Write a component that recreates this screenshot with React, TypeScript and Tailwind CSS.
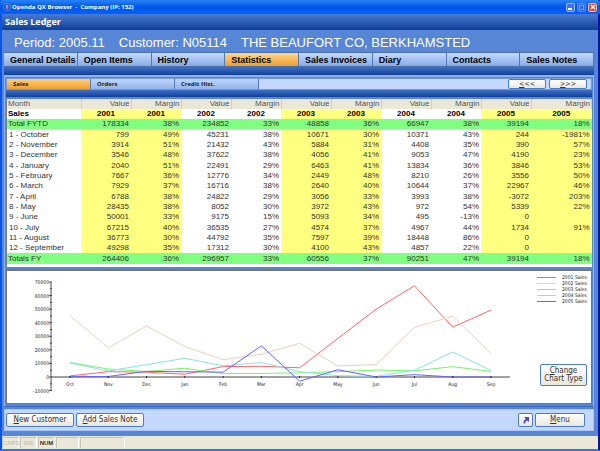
import { ReactNode } from "react";
import clsx from "clsx";

const TABS = [
  "General Details",
  "Open Items",
  "History",
  "Statistics",
  "Sales Invoices",
  "Diary",
  "Contacts",
  "Sales Notes",
];

const SUB_TABS = ["Sales", "Orders", "Credit Hist."];

const YEARS = ["2001", "2002", "2003", "2004", "2005"];

interface Row {
  label: string;
  total?: boolean;
  // value, margin for each year in YEARS
  cells: string[];
}

const ROWS: Row[] = [
  { label: "Total FYTD", total: true, cells: ["178334", "38%", "234852", "33%", "48858", "36%", "66947", "38%", "39194", "18%"] },
  { label: "1 - October", cells: ["799", "49%", "45231", "38%", "10671", "30%", "10371", "43%", "244", "-1981%"] },
  { label: "2 - November", cells: ["3914", "51%", "21432", "43%", "5884", "31%", "4408", "35%", "390", "57%"] },
  { label: "3 - December", cells: ["3546", "48%", "37622", "38%", "4056", "41%", "9053", "47%", "4190", "23%"] },
  { label: "4 - January", cells: ["2040", "51%", "22491", "29%", "6463", "41%", "13834", "36%", "3846", "53%"] },
  { label: "5 - February", cells: ["7667", "36%", "12776", "34%", "2449", "48%", "8210", "26%", "3556", "50%"] },
  { label: "6 - March", cells: ["7929", "37%", "16716", "38%", "2640", "40%", "10644", "37%", "22967", "46%"] },
  { label: "7 - April", cells: ["6788", "38%", "24822", "29%", "3056", "33%", "3993", "38%", "-3072", "203%"] },
  { label: "8 - May", cells: ["28435", "38%", "8052", "30%", "3972", "43%", "972", "54%", "5339", "22%"] },
  { label: "9 - June", cells: ["50001", "33%", "9175", "15%", "5093", "34%", "495", "-13%", "0", ""] },
  { label: "10 - July", cells: ["67215", "40%", "36535", "27%", "4574", "37%", "4967", "44%", "1734", "91%"] },
  { label: "11 - August", cells: ["36773", "30%", "44792", "35%", "7597", "39%", "18448", "86%", "0", ""] },
  { label: "12 - September", cells: ["49298", "35%", "17312", "30%", "4100", "43%", "4857", "22%", "0", ""] },
  { label: "Totals FY", total: true, cells: ["264406", "36%", "296957", "33%", "60556", "37%", "90251", "47%", "39194", "18%"] },
];

const MONTHS = ["Oct", "Nov", "Dec", "Jan", "Feb", "Mar", "Apr", "May", "Jun", "Jul", "Aug", "Sep"];
const COLORS = ["#ff6464", "#e6d2be", "#78f564", "#8ce1e1", "#6464ff"];
const TICKS = [70000, 60000, 50000, 40000, 30000, 20000, 10000, 0, -10000];

const xAt = (i: number) => 63 + (i * 421) / 11;
const yAt = (v: number) => 106 - (v * 95) / 70000;

function XpButton({ children, className, label }: { children: ReactNode; className?: string; label?: string }) {
  return (
    <button
      type="button"
      aria-label={label}
      className={clsx(
        "flex items-center justify-center rounded-[2px] border border-[#4a7dc4] bg-linear-to-b from-white to-[#e9e7dc] text-[#333]",
        className
      )}
    >
      {children}
    </button>
  );
}

function TitleBar() {
  return (
    <header className="flex h-[14px] items-center gap-px rounded-t-[3px] bg-linear-to-b from-[#2a82f8] via-[#0055e5] to-[#0062ff] px-[3px]">
      <svg viewBox="0 0 8 8" className="size-2">
        <circle cx="4" cy="4" r="3.6" fill="#2c4fae" stroke="#6f94e0" strokeWidth="0.7" />
        <path d="M2.6 2.6 Q4 1.4 5.4 2.8 Q5.8 5 4 6.2 Q2.4 5 3 3.6 Z" fill="#9db8ee" />
        <path d="M3.4 3.4 H4.8 M3.6 4.6 H4.6" stroke="#2c4fae" strokeWidth="0.6" />
      </svg>
      <span className="grow font-['Open_Sans',sans-serif] text-[6px] leading-[14px] font-bold whitespace-pre text-white">
        Openda QX Browser  -  Company (IP: 152)
      </span>
      <div className="flex gap-[2px]">
        <button type="button" aria-label="Minimize" className="flex size-[9px] items-end rounded-[2px] border border-[#9fbdf5] bg-[#3f70e8] p-px">
          <span className="h-[2px] w-1 bg-white" />
        </button>
        <button type="button" aria-label="Maximize" disabled className="size-[9px] rounded-[2px] border border-[#5f8cf0] bg-[#2f66e4] p-px">
          <span className="block size-[5px] border border-[#7fa2f2]" />
        </button>
        <button type="button" aria-label="Close" className="flex size-[9px] items-center justify-center rounded-[2px] border border-[#f0b8a8] bg-[#e2512b]">
          <svg viewBox="0 0 6 6" className="size-[6px]">
            <path d="M1 1 L5 5 M5 1 L1 5" stroke="white" strokeWidth="1.3" />
          </svg>
        </button>
      </div>
    </header>
  );
}

function SalesTable() {
  return (
    <table className="h-[165px] w-full table-fixed border-collapse font-['Liberation_Sans',sans-serif] text-[8px] leading-[10px] text-[#333]">
      <colgroup>
        <col className="w-[74px]" />
        {YEARS.map((y, i) => [
          <col key={y + "v"} className="w-[50px]" />,
          <col key={y + "m"} className={i === 4 ? "" : "w-[50px]"} />,
        ])}
      </colgroup>
      <thead>
        <tr className="h-[10px] bg-[#ebe8d8] text-[#555]">
          <th className="border-r border-[#d0cdbd] p-0 pl-px text-left font-normal">Month</th>
          {YEARS.map((y) => [
            <th key={y + "v"} className="border-r border-[#d0cdbd] p-0 pr-px text-right font-normal">Value</th>,
            <th key={y + "m"} className="border-r border-[#d0cdbd] p-0 pr-px text-right font-normal">Margin</th>,
          ])}
        </tr>
        <tr className="h-[10px] text-black">
          <th className="p-0 pl-px text-left">Sales</th>
          {YEARS.map((y, i) => [
            <th key={y + "v"} className={clsx("p-0", i % 2 === 0 && "bg-[#ffff80]")}>{y}</th>,
            <th key={y + "m"} className={clsx("p-0", i % 2 === 0 && "bg-[#ffff80]")}>{y}</th>,
          ])}
        </tr>
      </thead>
      <tbody>
        {ROWS.map((row) => (
          <tr key={row.label} className={row.total ? "bg-[#80ff80]" : ""}>
            <td className={clsx("p-0 whitespace-nowrap", row.total ? "pl-px" : "pl-[2px]")}>{row.label}</td>
            {row.cells.map((cell, i) => (
              <td
                key={i}
                className={clsx("p-0 pr-[2px] text-right", !row.total && i % 4 < 2 && "bg-[#ffff80]")}
              >
                {cell}
              </td>
            ))}
          </tr>
        ))}
      </tbody>
    </table>
  );
}

function SalesChart() {
  const months = ROWS.filter((r) => !r.total);
  return (
    <svg viewBox="0 0 584 132" className="block w-full" fontSize="5" fill="#222">
      {/* axes */}
      <path d={`M44 ${yAt(70000)} V${yAt(-10000)}`} stroke="#555" />
      <path d={`M44 ${yAt(0)} H503`} stroke="#444" />
      {TICKS.map((t) => (
        <g key={t}>
          <path d={`M42 ${yAt(t)} H45`} stroke="#444" />
          {t > -10000 && <path d={`M43 ${yAt(t - 5000)} H45`} stroke="#444" />}
          <text x="42" y={yAt(t) + 2} textAnchor="end">{t}</text>
        </g>
      ))}

      {/* one line for each year */}
      {YEARS.map((y, s) => (
        <polyline
          key={y}
          points={months.map((r, i) => `${xAt(i)},${yAt(Number(r.cells[s * 2]))}`).join(" ")}
          fill="none"
          stroke={COLORS[s]}
        />
      ))}

      {MONTHS.map((m, i) => (
        <g key={m}>
          <path d={`M${xAt(i)} 105 V107`} stroke="#222" />
          <text x={xAt(i)} y="115" textAnchor="middle">{m}</text>
        </g>
      ))}

      {/* legend */}
      {YEARS.map((y, i) => (
        <g key={y}>
          <rect x="530" y={6 + i * 6} width="19" height="1" fill={COLORS[i]} />
          <text x="555" y={8 + i * 6}>{y} Sales</text>
        </g>
      ))}
    </svg>
  );
}

export default function App() {
  return (
    <div className="w-full bg-[#5886d7] font-['DejaVu_Sans_Condensed','DejaVu_Sans',sans-serif]">
      <div className="border-x-2 border-b-2 border-[#0a55e0] border-r-[#0318a8] border-b-[#2a78e8]">
        <div className="-mx-[2px]">
          <TitleBar />
        </div>

        <h1 className="h-4 bg-linear-to-b from-[#4a7ad0] to-[#0d3f98] pl-[3px] font-['Open_Sans',sans-serif] text-[9px] leading-[15px] font-bold text-white">
          Sales Ledger
        </h1>

        <div className="px-[2px] pr-1">
          <p className="flex h-[22px] items-center gap-[14px] pt-[3px] pl-[10px] font-['Liberation_Sans',sans-serif] text-[13px] leading-4 whitespace-nowrap text-white">
            <span>Period: 2005.11</span>
            <span>Customer: N05114</span>
            <span>THE BEAUFORT CO, BERKHAMSTED</span>
          </p>

          <nav className="flex h-[15px] border-y border-[#4a6ea8] font-['Liberation_Sans',sans-serif]">
            {TABS.map((tab) => (
              <button
                key={tab}
                type="button"
                className={clsx(
                  "min-w-0 flex-1 border-r border-[#5578b4] pt-px pl-[6px] text-left text-[9px] leading-[12px] font-bold whitespace-nowrap text-black",
                  tab === "Statistics"
                    ? "bg-linear-to-b from-[#ffd685] to-[#f09f28]"
                    : "bg-linear-to-b from-[#c4d9fb] to-[#87abe6]"
                )}
              >
                {tab}
              </button>
            ))}
          </nav>
          <div className="h-2 bg-linear-to-b from-[#3f70c8] to-[#0f3f98]" />

          <main className="border border-t-2 border-[#8fb1ee] border-b-[#3a68bd] px-px pt-px pb-[2px]">
            <nav className="flex h-3 border border-[#7398d8] bg-[#c3d8fa]">
              {SUB_TABS.map((tab, i) => (
                <button
                  key={tab}
                  type="button"
                  className={clsx(
                    "w-[84px] border-r border-[#5578b4] pl-[6px] text-left font-['Open_Sans',sans-serif] text-[6px] leading-[10px] font-bold text-[#222]",
                    i === 0
                      ? "bg-linear-to-b from-[#ffce75] to-[#f0a02a]"
                      : "bg-linear-to-b from-[#c0d6fa] to-[#93b4ea]"
                  )}
                >
                  {tab}
                </button>
              ))}
              <div className="ml-auto flex gap-[3px] pr-1 text-[7px] leading-[9px]">
                <XpButton className="w-[38px]" label="Previous">
                  <u>&lt;</u>&lt;&lt;
                </XpButton>
                <XpButton className="w-[38px]" label="Next">
                  <u>&gt;</u>&gt;&gt;
                </XpButton>
              </div>
            </nav>
            <div className="h-[7px] bg-linear-to-b from-[#3f70c8] to-[#0f3f98]" />

            <section className="mt-[2px] border-l border-[#6f7f9a] bg-white pb-[3px]">
              <SalesTable />
            </section>

            <section className="relative mt-[2px] border border-t-2 border-[#777] bg-white">
              <SalesChart />
              <XpButton className="absolute right-1 bottom-[17px] w-[47px] flex-col py-[2px] text-[8px] leading-2 whitespace-nowrap">
                <span><u>C</u>hange</span>
                <span>Chart Type</span>
              </XpButton>
            </section>
          </main>

          <footer className="mt-[2px] flex h-[22px] items-center gap-[2px] border border-[#a9c5f5] bg-[#c3d8fa] pr-2 pl-px text-[8px] leading-[10px]">
            <XpButton className="h-[14px] w-[68px]">
              <span><u>N</u>ew Customer</span>
            </XpButton>
            <XpButton className="h-[14px] w-[68px]">
              <span><u>A</u>dd Sales Note</span>
            </XpButton>
            <XpButton className="ml-auto h-[14px] w-[15px]" label="Shortcut">
              <svg viewBox="0 0 8 8" className="size-2">
                <path d="M2 1 H7 V6 L5.4 4.4 Q3.2 5 3 7.4 H1.4 Q1.2 4.4 3.7 2.8 Z" fill="#5048c8" />
              </svg>
            </XpButton>
            <XpButton className="h-[14px] w-[50px]">
              <span><u>M</u>enu</span>
            </XpButton>
          </footer>
        </div>

        <div className="mt-[5px] flex h-[13px] gap-px bg-[#ebe8d8] py-px font-['Liberation_Sans',sans-serif] text-[6px] leading-[11px]">
          <span className="w-[17px] border border-b-0 border-[#c8c5b4] border-r-white text-center text-[#b5b2a2]">CAPS</span>
          <span className="w-[17px] border border-b-0 border-[#c8c5b4] border-r-white text-center text-[#b5b2a2]">INS</span>
          <span className="w-[17px] border border-b-0 border-[#c8c5b4] border-r-white text-center font-bold text-[#333]">NUM</span>
          <span className="w-[23px] border border-b-0 border-[#c8c5b4] border-r-white" />
          <span className="w-[45px] border border-b-0 border-[#c8c5b4] border-r-white" />
        </div>
      </div>
    </div>
  );
}
